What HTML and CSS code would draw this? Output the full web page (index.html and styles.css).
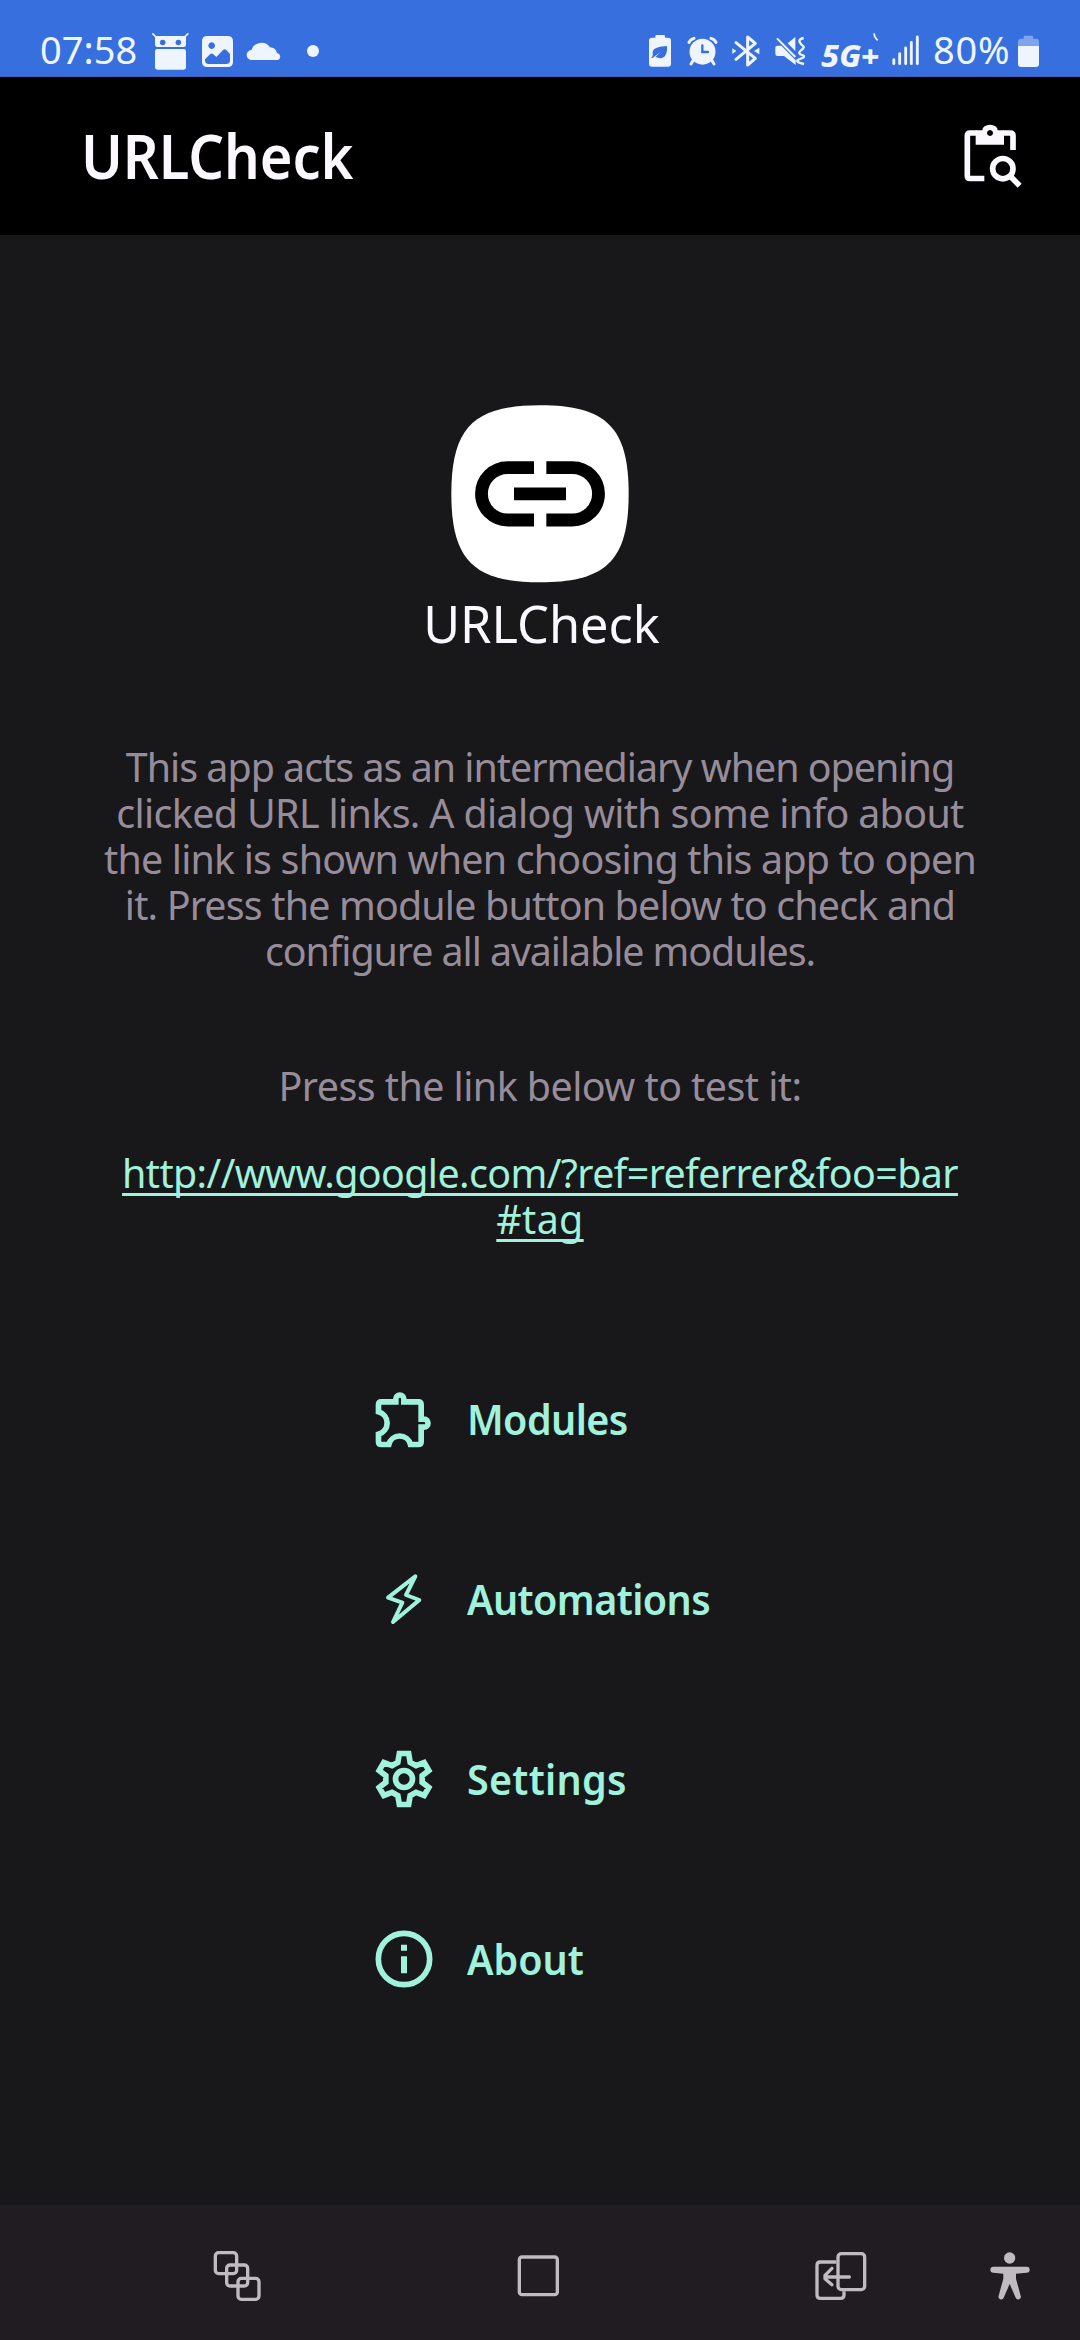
FILE: index.html
```html
<!DOCTYPE html>
<html lang="en">
<head>
<meta charset="utf-8">
<title>URLCheck</title>
<link rel="stylesheet" href="styles.css">
</head>
<body>
<div class="status">
  <span class="clock">07:58</span>
  <svg class="s-robot" width="40" height="40" viewBox="450 96 120 120"><path d="M457 100l14 14M565 100l-14 14" stroke="currentColor" stroke-width="5"/><path fill-rule="evenodd" d="M465 108H558V134q0 7-7 7H472q-7 0-7-7ZM488 119a8.500 8.500 0 1 0 .1 0ZM535 119a8.500 8.500 0 1 0 .1 0Z"/><rect x="465" y="147" width="93" height="62" rx="7"/></svg>
  <svg class="s-photo" width="35" height="40" viewBox="600 96 105 120"><path fill-rule="evenodd" d="M622 108H683q16 0 16 16V185q0 16-16 16H622q-16 0-16-16V124q0-16 16-16ZM635 127a10 10 0 1 0 .1 0ZM615 178L630 163q5-5 10 0l9 8 20-21q5-5 10 0l11 12V181q0 11-11 11H626q-11 0-11-11Z"/></svg>
  <svg class="s-cloud" width="37" height="40" viewBox="738 96 111 120"><path d="M756 180a15 15 0 0 1-2-30 31 29 0 0 1 56-8 23 22 0 0 1 21 17 11 11 0 0 1 3 21Z"/></svg>
  <svg class="s-dot" width="14" height="40" viewBox="918 96 42 120"><circle cx="939" cy="153" r="18"/></svg>
  <span class="spacer"></span>
  <svg class="s-saver" width="24" height="40" viewBox="54 96 72 120"><path fill-rule="evenodd" d="M76 113v-4q0-4 4-4h21q4 0 4 4v4h9q9 0 9 9v69q0 9-9 9H66q-9 0-9-9v-69q0-9 9-9ZM111 138C88 140 68 143 68 158V167L64 174H68L74 169L91 157L76 171C100 181 113 169 111 138Z"/></svg>
  <svg class="s-alarm" width="31" height="40" viewBox="171 96 93 120"><circle cx="217.500" cy="155" r="39"/><path d="M177 127q4-9 15-12M258 127q-4-9-15-12M190 180l-7 12M245 180l7 12" fill="none" stroke="currentColor" stroke-width="9" stroke-linecap="round"/><path d="M217 136V156H234" fill="none" stroke="#376fdf" stroke-width="7" stroke-linecap="round"/></svg>
  <svg class="s-bt" width="30" height="40" viewBox="303 96 90 120"><path d="M318 128L376 175L353 195V111L376 130L318 178" fill="none" stroke="currentColor" stroke-width="9" stroke-linecap="round" stroke-linejoin="round"/><path d="M307 145l12 8-12 9ZM388 143l-16 10 16 10Z"/></svg>
  <svg class="s-mute" width="31" height="40" viewBox="432 96 93 120"><path d="M496 111V153L473 130ZM436 142q0-5 7-5h11L497 181V195L462 168H443q-7 0-7-7Z"/><path d="M441 115L496 171" stroke="currentColor" stroke-width="6"/><path d="M521 114q-16 4-12 12t10 12-6 13 3 14-6 12 12 15" fill="none" stroke="currentColor" stroke-width="7"/></svg>
  <svg class="s-net" width="61" height="40" viewBox="570 96 183 120"><text x="574" y="200" textLength="174" lengthAdjust="spacingAndGlyphs">5G+</text><path d="M732 100q1 12 11 21" fill="none" stroke="currentColor" stroke-width="5"/></svg>
  <svg class="s-signal" width="29" height="40" viewBox="783 96 87 120"><path d="M791.500 179V191M809 161V191M827 144V191M844 127V191M862 111V191" stroke="currentColor" stroke-width="8.500" stroke-linecap="round"/></svg>
  <span class="percent">80%</span>
  <svg class="s-batt" width="23" height="40" viewBox="1161 96 69 120"><path opacity=".4" d="M1181 116v-5q0-4 4-4h20q4 0 4 4v5h9q9 0 9 10v12H1164v-12q0-10 9-10Z"/><path d="M1164 138H1227V192q0 9-9 9H1173q-9 0-9-9Z"/></svg>
</div>
<header class="appbar">
  <h1 class="title">URLCheck</h1>
  <svg class="paste" width="60" height="66" viewBox="999 370 180 198"><g fill="none" stroke="currentColor" stroke-width="17"><path d="M1063 536.500H1020q-8 0-8-8V408q0-8 8-8H1040M1120 400H1141q8 0 8 8V451"/><circle cx="1118.500" cy="507" r="30.500"/><path d="M1138 527L1169 558"/></g><path fill-rule="evenodd" d="M1037 392H1057A23 17 0 0 1 1103 392H1122V435H1037ZM1080 391a9 9 0 1 0 .1 0Z"/></svg>
</header>
<main class="content">
  <svg width="178" height="178" viewBox="153 75 534 534"><path fill="#fff" d="M420 76C619 76 686 143 686 341.500S619 607 420 607 154 540 154 341.500 221 76 420 76Z"/><g fill="none" stroke="#000" stroke-width="38.500"><path d="M402 263H323A78.500 78.500 0 0 0 323 420H402M439 263H517A78.500 78.500 0 0 1 517 420H439M342 341.500H498"/></g></svg>
  <div class="name">URLCheck</div>
  <p class="intro"><span class="l1">This app acts as an intermediary when opening</span><br><span class="l2">clicked URL links. A dialog with some info about</span><br><span class="l3">the link is shown when choosing this app to open</span><br><span class="l4">it. Press the module button below to check and</span><br><span class="l5">configure all available modules.</span></p>
  <p class="hint">Press the link below to test it:</p>
  <a class="link">http://www.google.com/?ref=referrer&amp;foo=bar<br><span class="tail">#tag</span></a>
  <nav class="menu">
    <a class="item"><svg width="68" height="68" viewBox="60 45 204 204"><path fill="none" stroke="currentColor" stroke-width="17" d="M94 95.500H137.500V87a12 12 0 0 1 24 0V95.500H205q8.500 0 8.500 8.500V147.500H222a12 12 0 0 1 0 24H213.500V215q0 8.500-8.500 8.500H181.500A33.500 33.500 0 0 0 116.500 223.500H94q-8.500 0-8.500-8.500V192.400A34.500 34.500 0 0 0 85.500 125.600V104q0-8.500 8.500-8.500Z"/></svg><span class="label tight">Modules</span></a>
    <a class="item"><svg width="68" height="68" viewBox="60 585 204 204"><path fill="none" stroke="currentColor" stroke-width="12" stroke-linejoin="round" d="M196 619L168 675 208 690 129 756 157 698 114 683Z"/></svg><span class="label tight">Automations</span></a>
    <a class="item"><svg width="68" height="68" viewBox="60 45 204 204"><g fill="none" stroke="currentColor" stroke-width="17"><path stroke-linejoin="miter" d="M148 70.500H176L180.500 97 198 107 222.500 97.500 236.500 121.500 216.500 137V157L236.500 172.500 222.500 196.500 198 187 180.500 197 176 223.500H148L143.500 197 126 187 101.500 196.500 87.500 172.500 107.500 157V137L87.500 121.500 101.500 97.500 126 107 143.500 97Z"/><circle cx="162" cy="147" r="25.500"/></g></svg><span class="label wide">Settings</span></a>
    <a class="item"><svg width="68" height="68" viewBox="60 585 204 204"><circle cx="162" cy="687" r="77" fill="none" stroke="currentColor" stroke-width="17"/><path d="M153 644H171V662H153ZM153 679H171V730H153Z"/></svg><span class="label">About</span></a>
  </nav>
</main>
<footer class="navbar">
  <svg width="48" height="52" viewBox="97 180 144 156"><g fill="none" stroke="currentColor" stroke-width="10"><rect x="104" y="188" width="64" height="63" rx="10"/><rect x="138" y="225" width="63" height="63" rx="10"/><rect x="172" y="265" width="63" height="63" rx="10"/></g></svg>
  <svg width="44" height="44" viewBox="1009 194 132 132"><rect x="1016" y="203" width="114" height="113" rx="8" fill="none" stroke="currentColor" stroke-width="10"/></svg>
  <svg width="54" height="50" viewBox="101 183 162 150"><g fill="none" stroke="currentColor" stroke-width="10"><path d="M168 216H120q-10 0-10 10V315q0 10 10 10H181q10 0 10-10V304"/><rect x="173" y="191" width="80" height="108" rx="10"/><path stroke-linecap="round" stroke-linejoin="round" d="M207 261H134M155 235L134 256V266L155 284"/></g></svg>
  <svg width="40" height="50" viewBox="630 187 120 150"><circle cx="689" cy="208" r="17"/><path d="M640 234H740a9 9 0 0 1 0 18L708 255V270L722 321a8 8 0 0 1-15 6L689 286 671 327a8 8 0 0 1-15-6L670 270V255L640 252a9 9 0 0 1 0-18Z"/></svg>
</footer>
</body>
</html>
```
FILE: styles.css
```css
* { box-sizing: border-box; }
body {
  margin: 0;
  width: 1080px;
  height: 2340px;
  display: flex;
  flex-direction: column;
  background: #18181a;
  color: #fbf9ff;
  font-family: "Noto Sans", sans-serif;
}
svg { display: block; flex: none; fill: currentColor; }
.status {
  height: 77px;
  flex: none;
  display: flex;
  align-items: flex-start;
  padding: 32px 40px 0;
  background: #376fdf;
  color: #eef5ff;
  border-bottom: 1px solid #4063b8;
}
.clock, .percent {
  font-size: 38px;
  line-height: 50px;
  margin-top: -8px;
  white-space: nowrap;
}
.clock { width: 110px; }
.percent { width: 84px; margin-left: 13px; letter-spacing: 0.8px; }
.spacer { flex: 1; }
.s-photo { margin-left: 10px; }
.s-cloud { margin-left: 11px; }
.s-dot { margin-left: 23px; }
.s-alarm { margin-left: 15px; }
.s-bt { margin-left: 13px; }
.s-mute { margin-left: 13px; }
.s-net { margin-left: 15px; overflow: visible; }
.s-net text { font-size: 90px; font-weight: 800; font-style: italic; }
.s-signal { margin-left: 10px; }
.appbar {
  height: 158px;
  flex: none;
  display: flex;
  align-items: center;
  justify-content: space-between;
  padding: 0 57px 0 81px;
  background: #000;
}
.title {
  margin: 0;
  font-size: 61px;
  line-height: 80px;
  font-weight: 600;
  letter-spacing: -0.1px;
  transform: scaleX(0.92);
  transform-origin: left;
}
.content {
  flex: 1;
  display: flex;
  flex-direction: column;
  align-items: center;
  padding-top: 170px;
}
.name { margin-top: 11px; padding-left: 3px; font-size: 50.5px; line-height: 60px; }
.intro, .hint, .link {
  margin: 0;
  font-size: 39.4px;
  line-height: 46px;
  text-align: center;
  white-space: nowrap;
  color: #978d9a;
}
.intro { margin-top: 90px; }
.l1 { letter-spacing: -1px; }
.l2 { letter-spacing: -0.65px; }
.l3 { letter-spacing: -0.8px; }
.l4 { letter-spacing: -0.83px; }
.l5 { letter-spacing: -1.08px; }
.hint { margin-top: 89px; letter-spacing: -0.54px; }
.link {
  margin-top: 41px;
  color: #a0f2dc;
  letter-spacing: -0.6px;
  text-decoration: underline;
  text-decoration-thickness: 3px;
  text-underline-offset: 5px;
  text-decoration-skip-ink: none;
}
.tail { letter-spacing: 0.35px; }
.menu { align-self: stretch; margin-top: 87px; padding-left: 370px; color: #a0f2dc; }
.item {
  height: 180px;
  display: flex;
  align-items: center;
  gap: 29px;
  font-size: 42px;
  line-height: 56px;
  font-weight: 600;
}
.label { transform: scaleX(0.94); transform-origin: left; }
.tight { letter-spacing: -0.6px; }
.wide { letter-spacing: 0.3px; }
.navbar {
  height: 135px;
  flex: none;
  display: grid;
  grid-template-columns: 302px 302px 302px 36px;
  justify-items: center;
  align-items: center;
  padding: 6px 0 0 86px;
  background: #211c22;
  color: #bebcc0;
}
```
